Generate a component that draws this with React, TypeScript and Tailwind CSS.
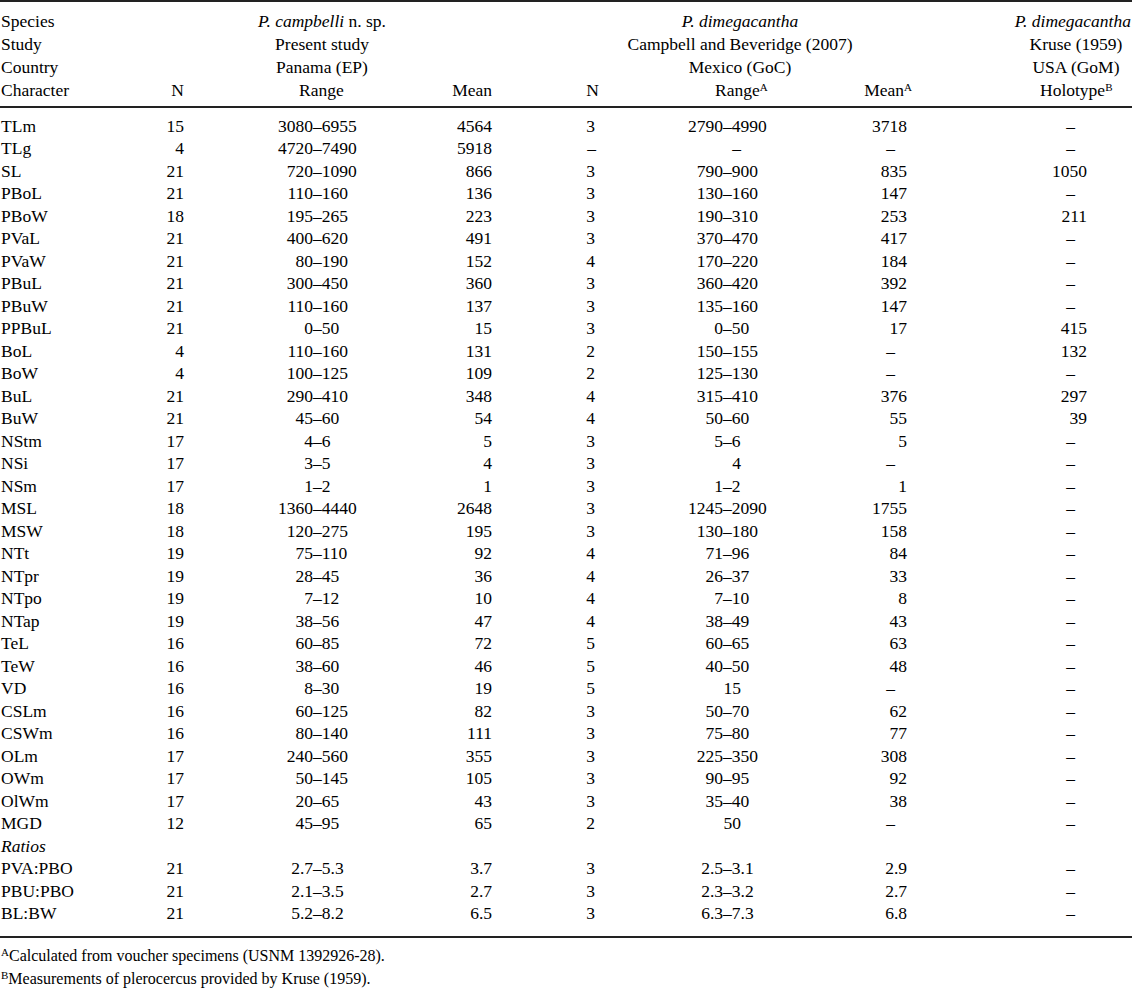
const D = "–";

type Row = [string, string, string, string, string, string, string, string];

const rows: Row[] = [
  ["TLm", "15", "3080–6955", "4564", "3", "2790–4990", "3718", D],
  ["TLg", "4", "4720–7490", "5918", D, D, D, D],
  ["SL", "21", "720–1090", "866", "3", "790–900", "835", "1050"],
  ["PBoL", "21", "110–160", "136", "3", "130–160", "147", D],
  ["PBoW", "18", "195–265", "223", "3", "190–310", "253", "211"],
  ["PVaL", "21", "400–620", "491", "3", "370–470", "417", D],
  ["PVaW", "21", "80–190", "152", "4", "170–220", "184", D],
  ["PBuL", "21", "300–450", "360", "3", "360–420", "392", D],
  ["PBuW", "21", "110–160", "137", "3", "135–160", "147", D],
  ["PPBuL", "21", "0–50", "15", "3", "0–50", "17", "415"],
  ["BoL", "4", "110–160", "131", "2", "150–155", D, "132"],
  ["BoW", "4", "100–125", "109", "2", "125–130", D, D],
  ["BuL", "21", "290–410", "348", "4", "315–410", "376", "297"],
  ["BuW", "21", "45–60", "54", "4", "50–60", "55", "39"],
  ["NStm", "17", "4–6", "5", "3", "5–6", "5", D],
  ["NSi", "17", "3–5", "4", "3", "4", D, D],
  ["NSm", "17", "1–2", "1", "3", "1–2", "1", D],
  ["MSL", "18", "1360–4440", "2648", "3", "1245–2090", "1755", D],
  ["MSW", "18", "120–275", "195", "3", "130–180", "158", D],
  ["NTt", "19", "75–110", "92", "4", "71–96", "84", D],
  ["NTpr", "19", "28–45", "36", "4", "26–37", "33", D],
  ["NTpo", "19", "7–12", "10", "4", "7–10", "8", D],
  ["NTap", "19", "38–56", "47", "4", "38–49", "43", D],
  ["TeL", "16", "60–85", "72", "5", "60–65", "63", D],
  ["TeW", "16", "38–60", "46", "5", "40–50", "48", D],
  ["VD", "16", "8–30", "19", "5", "15", D, D],
  ["CSLm", "16", "60–125", "82", "3", "50–70", "62", D],
  ["CSWm", "16", "80–140", "111", "3", "75–80", "77", D],
  ["OLm", "17", "240–560", "355", "3", "225–350", "308", D],
  ["OWm", "17", "50–145", "105", "3", "90–95", "92", D],
  ["OlWm", "17", "20–65", "43", "3", "35–40", "38", D],
  ["MGD", "12", "45–95", "65", "2", "50", D, D],
];

const ratios: Row[] = [
  ["PVA:PBO", "21", "2.7–5.3", "3.7", "3", "2.5–3.1", "2.9", D],
  ["PBU:PBO", "21", "2.1–3.5", "2.7", "3", "2.3–3.2", "2.7", D],
  ["BL:BW", "21", "5.2–8.2", "6.5", "3", "6.3–7.3", "6.8", D],
];

function split(v: string) {
  const i = v.indexOf(D);
  return [v.slice(0, i), v.slice(i)];
}

// ranges are lined up on the dash
function Range1({ v }: { v: string }) {
  const [lo, hi] = split(v);
  return (
    <div className="flex w-[236px]">
      <span className="w-[129px] text-right">{lo}</span>
      <span>{hi}</span>
    </div>
  );
}

function Range2({ v }: { v: string }) {
  if (v === D || !v.includes(D)) {
    return <div className="w-[219px] pr-[79px] text-right">{v}</div>;
  }
  const [lo, hi] = split(v);
  return (
    <div className="flex w-[219px]">
      <span className="w-[122px] text-right">{lo}</span>
      <span>{hi}</span>
    </div>
  );
}

function DataRow({ r }: { r: Row }) {
  return (
    <div className="flex h-[22.5px] items-center whitespace-nowrap">
      <div className="w-[140px] pl-[1px]">{r[0]}</div>
      <div className="w-[44px] text-right">{r[1]}</div>
      <Range1 v={r[2]} />
      <div className="w-[72px] text-right">{r[3]}</div>
      <div className="w-[68px]" />
      <div className={r[4] === D ? "w-[41px] pr-[5px] text-right" : "w-[41px] pr-[6px] text-right"}>{r[4]}</div>
      <Range2 v={r[5]} />
      <div className={r[6] === D ? "w-[87px] pr-[12px] text-right" : "w-[87px] text-right"}>{r[6]}</div>
      <div className={r[7] === D ? "w-[180px] pr-[12px] text-right" : "w-[180px] text-right"}>{r[7]}</div>
    </div>
  );
}

export default function App() {
  return (
    <div className="w-[1132px] h-[989px] overflow-hidden bg-white text-black font-['Liberation_Serif','Times_New_Roman',serif] text-[17.5px] leading-[23px]">
      <div className="h-[2px] bg-[#222]" />
      {/* header */}
      <div className="pt-[8px] pb-[4px] whitespace-nowrap">
        <div className="flex h-[23px]">
          <div className="w-[184px] pl-[1px]">Species</div>
          <div className="w-[276px] text-center">
            <i>P. campbelli</i> n. sp.
          </div>
          <div className="w-[164px]" />
          <div className="w-[232px] text-center">
            <i>P. dimegacantha</i>
          </div>
          <div className="flex-1 text-right pr-[1px]">
            <i>P. dimegacantha</i>
          </div>
        </div>
        <div className="flex h-[23px]">
          <div className="w-[184px] pl-[1px]">Study</div>
          <div className="w-[276px] text-center">Present study</div>
          <div className="w-[164px]" />
          <div className="w-[232px] text-center">Campbell and Beveridge (2007)</div>
          <div className="w-[164px]" />
          <div className="w-[112px] text-center">Kruse (1959)</div>
        </div>
        <div className="flex h-[23px]">
          <div className="w-[184px] pl-[1px]">Country</div>
          <div className="w-[276px] text-center">Panama (EP)</div>
          <div className="w-[164px]" />
          <div className="w-[232px] text-center">Mexico (GoC)</div>
          <div className="w-[164px]" />
          <div className="w-[112px] text-center">USA (GoM)</div>
        </div>
        <div className="flex h-[23px]">
          <div className="w-[140px] pl-[1px]">Character</div>
          <div className="w-[44px] text-right">N</div>
          <div className="w-[236px] pl-[115px]">Range</div>
          <div className="w-[72px] text-right">Mean</div>
          <div className="w-[68px]" />
          <div className="w-[39px] text-right">N</div>
          <div className="w-[221px] pl-[116px]">
            Range<sup className="text-[11px]">A</sup>
          </div>
          <div className="w-[92px] text-right">
            Mean<sup className="text-[11px]">A</sup>
          </div>
          <div className="flex-1 pl-[128px]">
            Holotype<sup className="text-[11px]">B</sup>
          </div>
        </div>
      </div>
      <div className="h-[2px] bg-[#222]" />
      {/* body */}
      <div className="pt-[7px] pb-[11px]">
        {rows.map((r) => (
          <DataRow key={r[0]} r={r} />
        ))}
        <div className="flex h-[22.5px] items-center pl-[1px] italic">Ratios</div>
        {ratios.map((r) => (
          <DataRow key={r[0]} r={r} />
        ))}
      </div>
      <div className="h-[2px] bg-[#222]" />
      <div className="pt-[6px] pl-[1px] text-[16px]">
        <div className="h-[23px]">
          <sup className="text-[11px]">A</sup>Calculated from voucher specimens (USNM 1392926-28).
        </div>
        <div className="h-[23px]">
          <sup className="text-[11px]">B</sup>Measurements of plerocercus provided by Kruse (1959).
        </div>
      </div>
    </div>
  );
}
